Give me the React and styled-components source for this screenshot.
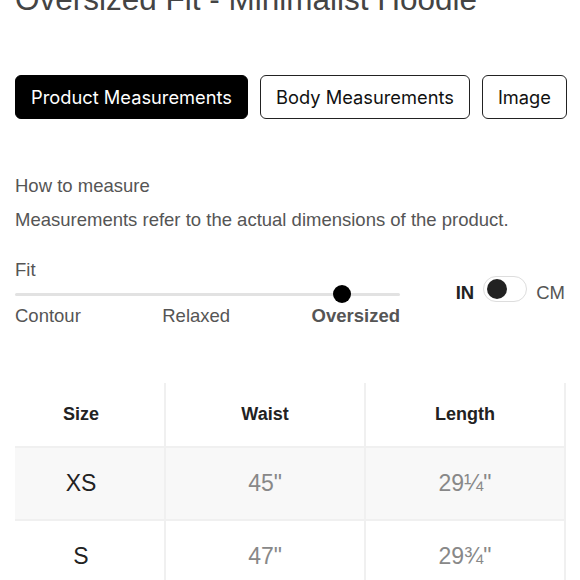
import React from "react";
import styled, { createGlobalStyle } from "styled-components";

const GlobalStyle = createGlobalStyle`
  html, body {
    margin: 0;
    padding: 0;
    background: #fff;
    overflow: hidden;
  }
  body {
    font-family: "Liberation Sans", Arial, sans-serif;
  }
`;

const Page = styled.div`
  width: 580px;
  height: 580px;
  padding: 0 15px;
  box-sizing: border-box;
  overflow: hidden;
`;

const Title = styled.h1`
  margin: -17px 0 0;
  font-size: 31.5px;
  line-height: 32px;
  font-weight: 400;
  color: #444;
  white-space: nowrap;
`;

const Tabs = styled.div`
  display: flex;
  gap: 12px;
  margin-top: 60px;
`;

const Tab = styled.button`
  flex-shrink: 0;
  height: 44px;
  padding: 0 15px;
  box-sizing: border-box;
  border-radius: 6px;
  border: 1.5px solid ${(p) => (p.$active ? "#000" : "#222")};
  background: ${(p) => (p.$active ? "#000" : "#fff")};
  color: ${(p) => (p.$active ? "#fff" : "#111")};
  font-family: Inter, "Liberation Sans", sans-serif;
  font-size: 18.3px;
  font-weight: 400;
  white-space: nowrap;
  cursor: pointer;
`;

const Text = styled.p`
  margin: ${(p) => p.$mt || 0}px 0 0;
  font-size: 18.5px;
  line-height: 20px;
  color: #555;
`;

const FitRow = styled.div`
  display: flex;
  margin-top: 30px;
`;

const FitColumn = styled.div`
  width: 385px;
`;

const SliderArea = styled.div`
  position: relative;
  height: 28px;
`;

const Track = styled.div`
  position: absolute;
  left: 0;
  right: 0;
  top: 13px;
  height: 3px;
  background: #e2e2e2;
  border-radius: 2px;
`;

const Thumb = styled.div`
  position: absolute;
  top: 5px;
  width: 18px;
  height: 18px;
  margin-left: -9px;
  border-radius: 50%;
  background: #000;
`;

const Labels = styled.div`
  display: flex;
  justify-content: space-between;
  margin-top: -2px;
`;

const FitLabel = styled.span`
  font-size: 18.5px;
  line-height: 20px;
  color: #555;
  font-weight: ${(p) => (p.$active ? 700 : 400)};
`;

const UnitGroup = styled.div`
  margin-left: auto;
  padding-top: 16px;
  display: flex;
  align-items: flex-start;
  gap: 9px;
  height: 26px;
`;

const Unit = styled.span`
  font-size: 18.5px;
  line-height: 26px;
  margin-top: 4px;
  color: ${(p) => (p.$active ? "#222" : "#555")};
  font-weight: ${(p) => (p.$active ? 700 : 400)};
`;

const Switch = styled.div`
  position: relative;
  width: 44px;
  height: 26px;
  box-sizing: border-box;
  border: 1.5px solid #ddd;
  border-radius: 13px;
  background: #fff;
`;

const Knob = styled.div`
  position: absolute;
  top: 1.5px;
  left: 3px;
  width: 20px;
  height: 20px;
  border-radius: 50%;
  background: #222;
`;

const Table = styled.table`
  margin-top: 57px;
  width: 550px;
  border-collapse: collapse;
  table-layout: fixed;
`;

const Th = styled.th`
  height: 63px;
  padding: 0 ${(p) => (p.$first ? 17 : 0)}px 0 0;
  font-size: 18px;
  font-weight: 700;
  color: #222;
  text-align: center;
  border-right: 2px solid #f0f0f0;
  border-bottom: 2px solid #f0f0f0;
`;

const Row = styled.tr`
  background: ${(p) => (p.$shaded ? "#f8f8f8" : "#fff")};
`;

const Td = styled.td`
  height: 71px;
  padding: 0 ${(p) => (p.$first ? 17 : 0)}px 0 0;
  font-size: 23px;
  text-align: center;
  color: ${(p) => (p.$first ? "#222" : "#888")};
  border-right: 2px solid #f0f0f0;
  border-bottom: 2px solid #f0f0f0;
`;

const rows = [
  { size: "XS", waist: "45\"", length: "29¼\"" },
  { size: "S", waist: "47\"", length: "29¾\"" },
];

export default function App() {
  return (
    <Page>
      <GlobalStyle />
      <Title>Oversized Fit - Minimalist Hoodie</Title>
      <Tabs>
        <Tab $active>Product Measurements</Tab>
        <Tab>Body Measurements</Tab>
        <Tab>Image</Tab>
      </Tabs>
      <Text $mt={57}>How to measure</Text>
      <Text $mt={14}>Measurements refer to the actual dimensions of the product.</Text>
      <FitRow>
        <FitColumn>
          <Text>Fit</Text>
          <SliderArea>
            <Track />
            <Thumb style={{ left: "85%" }} />
          </SliderArea>
          <Labels>
            <FitLabel>Contour</FitLabel>
            <FitLabel>Relaxed</FitLabel>
            <FitLabel $active>Oversized</FitLabel>
          </Labels>
        </FitColumn>
        <UnitGroup>
          <Unit $active>IN</Unit>
          <Switch>
            <Knob />
          </Switch>
          <Unit>CM</Unit>
        </UnitGroup>
      </FitRow>
      <Table>
        <colgroup>
          <col style={{ width: 150 }} />
          <col style={{ width: 200 }} />
          <col style={{ width: 200 }} />
        </colgroup>
        <thead>
          <tr>
            <Th $first>Size</Th>
            <Th>Waist</Th>
            <Th>Length</Th>
          </tr>
        </thead>
        <tbody>
          {rows.map((r, i) => (
            <Row key={r.size} $shaded={i === 0}>
              <Td $first>{r.size}</Td>
              <Td>{r.waist}</Td>
              <Td>{r.length}</Td>
            </Row>
          ))}
        </tbody>
      </Table>
    </Page>
  );
}
